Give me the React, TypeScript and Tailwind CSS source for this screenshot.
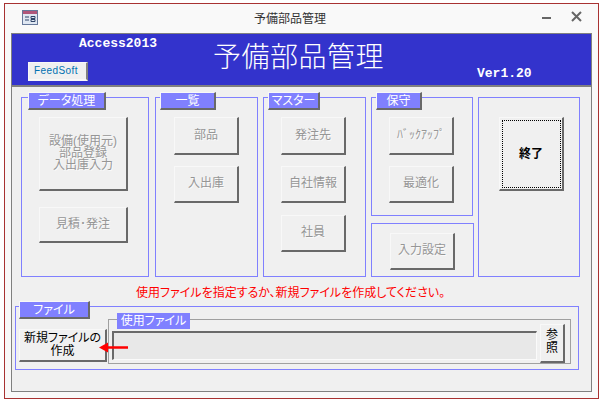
import { ReactNode } from "react";

const jp = "font-['Liberation_Sans','Noto_Sans_CJK_JP',sans-serif] [font-feature-settings:'palt']";

const bevel =
  "border-t border-l border-b-2 border-r-2 border-t-[#f8f8f8] border-l-[#f8f8f8] border-b-[#696969] border-r-[#696969] bg-[#f0f0f0]";

const Btn = ({ label, className }: { label: ReactNode; className: string }) => (
  <div
    className={`${bevel} ${className} flex items-center justify-center pb-[2px] text-center text-[12px] leading-[12px] whitespace-nowrap text-[#969696] [text-shadow:1px_1px_0_#fafafa]`}
  >
    {label}
  </div>
);

const Legend = ({ label, className }: { label: string; className: string }) => (
  <div
    className={`${bevel} ${className} absolute !bg-[#8080ff] h-[18px] flex items-center justify-center text-[12px] leading-none whitespace-nowrap text-white`}
  >
    {label}
  </div>
);

const Panel = ({ className, children }: { className: string; children: ReactNode }) => (
  <div className={`relative border border-[#8080ff] ${className}`}>{children}</div>
);

const App = () => {
  return (
    <div className={`w-[603px] h-[401px] overflow-hidden bg-white pt-[3px] pl-[4px] ${jp}`}>
      <div className="w-[595px] h-[396px] border border-[#a83232] bg-[#f9f9f9] pl-[6px]">
        {/* title bar */}
        <div className="h-[29px] flex items-center relative">
          <svg width="16" height="15" viewBox="0 0 16 15" className="ml-[11px] mt-[-3px]">
            <rect x="0.5" y="0.5" width="15" height="14" fill="#dfe7f2" stroke="#66789a" />
            <rect x="1" y="1" width="14" height="3" fill="#b0567a" />
            <path d="M3 7h4M3 10h4" stroke="#2f4468" />
            <path d="M9 6.5h4v2h-4zM9 9.5h4v2h-4z" fill="none" stroke="#2f4468" />
          </svg>
          <div className="flex-1 text-center text-[12px] text-[#333]">予備部品管理</div>
          <div className="w-[9px] h-[2px] bg-[#666] mr-[20px] mt-[-1px]" />
          <svg width="11" height="11" viewBox="0 0 11 11" className="mr-[16px] mt-[-4px]">
            <path d="M1 1l9 9M10 1l-9 9" stroke="#666" strokeWidth="2" />
          </svg>
        </div>

        {/* form */}
        <div className="w-[581px] h-[359px] border border-[#808080] bg-[#f0f0f0]">
          <div className="h-[53px] border-b-2 border-b-[#808080] bg-[#3333cc] flex text-white">
            <div className="w-[200px] pl-[16px] pt-[3px]">
              <div className="pl-[51px] font-['Liberation_Mono',monospace] font-bold text-[13px] leading-[14px]">Access2013</div>
              <div className="mt-[11px] w-[60px] h-[19px] border-t border-l border-b-2 border-r-2 border-t-[#f8f8f8] border-l-[#f8f8f8] border-b-[#f8f8f8] border-r-[#808080] bg-[#f0f0f0] flex items-center justify-center pr-[3px] pb-[1px] font-['Liberation_Sans',sans-serif] tracking-[0.4px] text-[10px] text-[#0070b0]">
                FeedSoft
              </div>
            </div>
            <div className="pl-[1px] pt-[6px] text-[28px] leading-[36px] font-light tracking-[0.5px] [font-feature-settings:normal]">予備部品管理</div>
            <div className="pl-[93px] pt-[33px] font-['Liberation_Mono',monospace] font-bold text-[13px] leading-[14px]">Ver1.20</div>
          </div>

          <div className="flex pl-[9px] pt-[10px] h-[190px]">
            <Panel className="w-[128px] h-[180px] flex flex-col items-start pl-[17px] pt-[19px]">
              <Legend label="データ処理" className="left-[6px] top-[-6px] w-[78px]" />
              <Btn label={<span>設備(使用元)<br />部品登録<br />入出庫入力</span>} className="w-[89px] h-[74px]" />
              <Btn label="見積･発注" className="w-[89px] h-[36px] mt-[16px]" />
            </Panel>
            <Panel className="w-[103px] h-[180px] ml-[6px] flex flex-col items-start pl-[18px] pt-[19px]">
              <Legend label="一覧" className="left-[4px] top-[-6px] w-[56px]" />
              <Btn label="部品" className="w-[65px] h-[38px]" />
              <Btn label="入出庫" className="w-[65px] h-[37px] mt-[11px]" />
            </Panel>
            <Panel className="w-[103px] h-[180px] ml-[5px] flex flex-col items-start pl-[17px] pt-[19px]">
              <Legend label="マスター" className="left-[4px] top-[-6px] w-[52px]" />
              <Btn label="発注先" className="w-[65px] h-[38px]" />
              <Btn label="自社情報" className="w-[65px] h-[37px] mt-[11px]" />
              <Btn label="社員" className="w-[65px] h-[37px] mt-[12px]" />
            </Panel>
            <div className="w-[102px] ml-[5px] flex flex-col">
              <Panel className="w-[102px] h-[119px] pl-[17px] pt-[19px]">
                <Legend label="保守" className="left-[4px] top-[-6px] w-[46px]" />
                <Btn label="ﾊﾞｯｸｱｯﾌﾟ" className="w-[65px] h-[38px]" />
                <Btn label="最適化" className="w-[65px] h-[37px] mt-[11px]" />
              </Panel>
              <Panel className="w-[103px] h-[54px] mt-[7px] pl-[18px] pt-[9px]">
                <Btn label="入力設定" className="w-[65px] h-[37px]" />
              </Panel>
            </div>
            <Panel className="w-[102px] h-[180px] ml-[5px] pl-[20px] pt-[19px]">
              <div className={`${bevel} w-[65px] h-[74px] flex items-center justify-center`}>
                <div className="w-[59px] h-[68px] border border-dotted border-black flex items-center justify-center text-[12px] font-bold text-black">
                  終了
                </div>
              </div>
            </Panel>
          </div>

          <div className="h-[29px] pt-[8px] pl-[124px] text-[12px] leading-[16px] whitespace-nowrap text-[#ff0000]">
            使用ファイルを指定するか、新規ファイルを作成してください。
          </div>

          {/* file panel */}
          <Panel className="ml-[3px] w-[564px] h-[64px] flex items-start pl-[3px]">
            <Legend label="ファイル" className="left-[3px] top-[-6px] w-[71px]" />
            <div className={`${bevel} relative mt-[22px] w-[88px] h-[33px] flex items-center justify-center text-center text-[12px] leading-[13px] whitespace-nowrap text-black`}>
              <span>新規ファイルの<br />作成</span>
            </div>
            <div className="relative ml-[1px] mt-[12px] w-[463px] h-[45px] border border-[#a0a0a0] flex items-start">
              <div className="absolute left-[8px] top-[-7px] w-[73px] h-[16px] bg-[#8080ff] text-white text-[12px] leading-[16px] text-center whitespace-nowrap">使用ファイル</div>
              <div className="ml-[3px] mt-[11px] w-[425px] h-[29px] border-t-2 border-l-2 border-t-[#696969] border-l-[#696969] border-b border-r border-b-[#fafafa] border-r-[#fafafa] bg-[#e8e8e8]" />
              <div className={`${bevel} ml-[3px] mt-[4px] w-[25px] h-[39px] flex items-center justify-center pb-[2px] text-center text-[12px] leading-[13px] text-black`}>
                <span>参<br />照</span>
              </div>
            </div>
            <svg width="31" height="11" viewBox="0 0 31 11" className="absolute left-[82px] top-[35px]">
              <path d="M30 5.5H9" stroke="#ff0000" strokeWidth="2.5" />
              <path d="M1 5.5L10 0.5V10.5Z" fill="#ff0000" />
            </svg>
          </Panel>
        </div>
      </div>
    </div>
  );
};

export default App;
